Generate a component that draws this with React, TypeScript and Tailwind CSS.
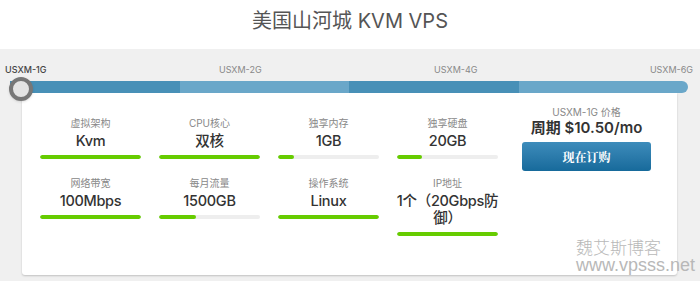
import React from "react";

const specs = [
  { label: "虚拟架构", value: "Kvm", pct: 100 },
  { label: "CPU核心", value: "双核", pct: 100 },
  { label: "独享内存", value: "1GB", pct: 16 },
  { label: "独享硬盘", value: "20GB", pct: 25 },
  { label: "网络带宽", value: "100Mbps", pct: 100 },
  { label: "每月流量", value: "1500GB", pct: 37 },
  { label: "操作系统", value: "Linux", pct: 100 },
  { label: "IP地址", value: "1个（20Gbps防御）", pct: 100 },
];

const plans = ["USXM-1G", "USXM-2G", "USXM-4G", "USXM-6G"];

function Spec({ label, value, pct }: { label: string; value: string; pct: number }) {
  return (
    <div className="flex flex-col items-center">
      <div className="text-[10px] leading-[12px] text-[#888]">{label}</div>
      <div className="mt-[3px] w-[111px] text-center break-all text-[14.5px] leading-[17px] tracking-[-0.3px] font-medium text-[#333]">
        {value}
      </div>
      <div className="mt-[6px] h-[4px] w-full rounded-full bg-[#eeeeee] overflow-hidden">
        <div className="h-full rounded-full bg-[#66cc00]" style={{ width: `${pct}%` }} />
      </div>
    </div>
  );
}

export default function App() {
  return (
    <div
      className="relative w-[700px] h-[281px] overflow-hidden bg-white flex flex-col"
      style={{ fontFamily: 'Inter, "Noto Sans CJK SC", sans-serif' }}
    >
      <div className="h-[49px] flex items-center justify-center text-[20px] text-[#555] pb-[8px]">
        美国山河城 KVM VPS
      </div>

      <div className="flex-1 bg-[#f0f0f0] flex flex-col">
        {/* plan labels */}
        <div className="flex justify-between pl-[5px] pr-[7px] pt-[14px] h-[32px] text-[9px] text-[#888]">
          {plans.map((p, i) => (
            <span key={p} className={i === 0 ? "text-[#444] font-medium" : ""}>
              {p}
            </span>
          ))}
        </div>

        {/* slider */}
        <div className="relative ml-[10px] mr-[12px] h-[12px] flex rounded-r-full overflow-hidden">
          <div className="flex-1 bg-[#4890b7]" />
          <div className="flex-1 bg-[#6aa7c9]" />
          <div className="flex-1 bg-[#4890b7]" />
          <div className="flex-1 bg-[#6aa7c9]" />
        </div>
        <div className="absolute left-[9px] top-[77px] w-[24px] h-[24px] rounded-full border-[4px] border-[#777] bg-[#e4e4e4] shadow" />

        {/* card */}
        <div className="ml-[22px] mr-[23px] h-[182px] bg-white rounded-b-[3px] shadow-[0_1px_2px_rgba(0,0,0,0.2)] flex pl-[18px] pt-[24px]">
          <div className="grid grid-cols-[101px_101px_101px_101px] gap-x-[18px] gap-y-[18px] content-start">
            {specs.map((s) => (
              <Spec key={s.label} {...s} />
            ))}
          </div>
          <div className="ml-[24px] w-[129px] flex flex-col items-center -mt-[11px]">
            <div className="text-[10px] leading-[12px] text-[#888]">USXM-1G 价格</div>
            <div className="mt-[1px] text-[15px] leading-[18px] font-semibold text-[#333] whitespace-nowrap">
              周期 $10.50/mo
            </div>
            <button
              className="mt-[5px] w-[129px] h-[29px] rounded-[3px] bg-gradient-to-b from-[#3d8cbb] to-[#166a9b] text-white text-[12px] font-bold"
              style={{ fontFamily: '"Noto Serif CJK SC", "Noto Sans CJK SC", serif' }}
            >
              现在订购
            </button>
          </div>
        </div>
      </div>

      {/* watermark */}
      <div className="absolute left-[576px] top-[238px] text-[#b8b8b8]">
        <div className="text-[17px] leading-[18px]" style={{ fontFamily: '"Noto Sans CJK SC", sans-serif', fontWeight: 300 }}>
          魏艾斯博客
        </div>
        <div className="text-[18px] leading-[18px]" style={{ fontFamily: '"Liberation Sans", sans-serif' }}>
          www.vpsss.net
        </div>
      </div>
    </div>
  );
}
